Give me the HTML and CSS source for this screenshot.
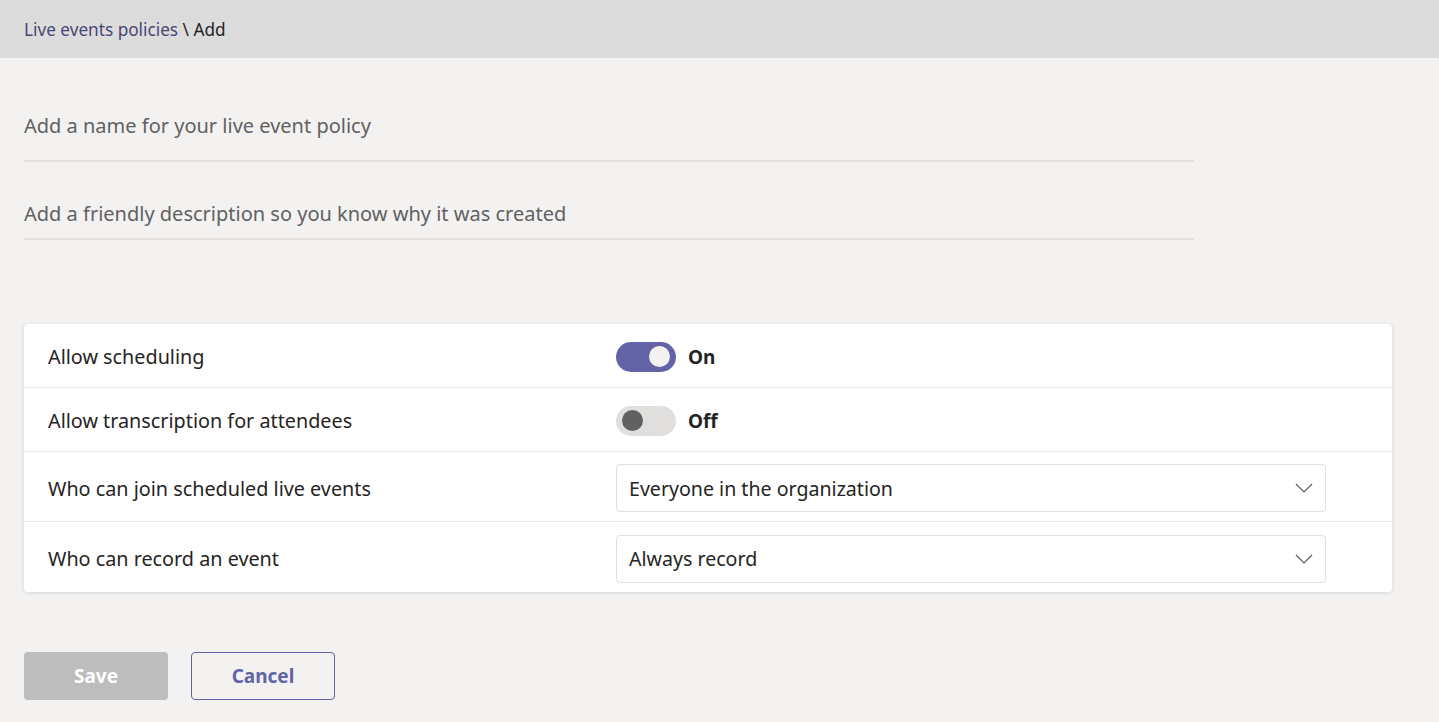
FILE: index.html
```html
<!DOCTYPE html>
<html>
<head>
<meta charset="utf-8">
<link rel="stylesheet" href="styles.css">
</head>
<body>
<header class="topbar">
  <span class="crumb-link">Live events policies</span><span class="crumb-sep"> \ Add</span>
</header>
<main class="content">
  <div class="field"><span class="placeholder">Add a name for your live event policy</span></div>
  <div class="field field-2"><span class="placeholder">Add a friendly description so you know why it was created</span></div>

  <section class="card">
    <div class="row row-toggle">
      <div class="label">Allow scheduling</div>
      <div class="control">
        <span class="toggle on"><span class="knob"></span></span>
        <span class="state">On</span>
      </div>
    </div>
    <div class="row row-toggle">
      <div class="label">Allow transcription for attendees</div>
      <div class="control">
        <span class="toggle off"><span class="knob"></span></span>
        <span class="state">Off</span>
      </div>
    </div>
    <div class="row row-select">
      <div class="label">Who can join scheduled live events</div>
      <div class="control">
        <div class="select"><span>Everyone in the organization</span>
          <svg class="chev" width="18" height="10" viewBox="0 0 18 10"><path d="M1 1 L9 9 L17 1" fill="none" stroke="#616161" stroke-width="1.2"/></svg>
        </div>
      </div>
    </div>
    <div class="row row-select last">
      <div class="label">Who can record an event</div>
      <div class="control">
        <div class="select"><span>Always record</span>
          <svg class="chev" width="18" height="10" viewBox="0 0 18 10"><path d="M1 1 L9 9 L17 1" fill="none" stroke="#616161" stroke-width="1.2"/></svg>
        </div>
      </div>
    </div>
  </section>

  <div class="actions">
    <button class="btn btn-save">Save</button>
    <button class="btn btn-cancel">Cancel</button>
  </div>
</main>
</body>
</html>
```
FILE: styles.css
```css
* { box-sizing: border-box; }
html, body { margin: 0; padding: 0; }
body {
  background: #f3f2f1;
  font-family: "Noto Sans", "Open Sans", sans-serif;
  color: #252423;
  width: 1439px;
  height: 722px;
  overflow: hidden;
}
.topbar {
  height: 58px;
  background: #dddcdc;
  padding: 0 24px;
  display: flex;
  align-items: center;
  font-size: 17.2px;
  padding-top: 1px;
}
.crumb-link { color: #464775; }
.crumb-sep { color: #252423; white-space: pre; }
.content { padding: 0 24px; }
.field {
  width: 1170px;
  height: 104px;
  border-bottom: 2px solid #e1dfdd;
  display: flex;
  align-items: flex-end;
  padding-bottom: 21px;
}
.field-2 { height: 78px; padding-bottom: 11px; }
.placeholder { font-size: 20px; color: #616161; }
.card {
  margin-top: 84px;
  width: 1368px;
  background: #fff;
  border-radius: 4px;
  box-shadow: 0 1px 4px rgba(0,0,0,0.12);
}
.row {
  display: flex;
  align-items: center;
  border-bottom: 1px solid #edebe9;
  padding-left: 24px;
}
.row.last { border-bottom: none; }
.row-toggle { height: 64px; padding-top: 2px; }
.row-select { height: 70px; padding-top: 3px; }
.label { width: 568px; font-size: 19.8px; color: #252423; }
.control { display: flex; align-items: center; }
.toggle {
  width: 60px;
  height: 30px;
  border-radius: 15px;
  display: flex;
  align-items: center;
  padding: 0 6px;
}
.toggle.on { background: #6264a7; justify-content: flex-end; }
.toggle.off { background: #e1dfdd; justify-content: flex-start; }
.knob { width: 21px; height: 21px; border-radius: 50%; }
.toggle.on .knob { background: #f3f2f1; }
.toggle.off .knob { background: #616161; }
.state { margin-left: 12px; font-size: 19px; font-weight: 700; }
.select {
  width: 710px;
  height: 48px;
  border: 1px solid #e1dfdd;
  border-radius: 4px;
  display: flex;
  align-items: center;
  justify-content: space-between;
  padding: 0 12px 0 12px;
  font-size: 19.6px;
  color: #252423;
}
.actions { margin-top: 60px; display: flex; gap: 23px; }
.btn {
  width: 144px;
  height: 48px;
  border-radius: 4px;
  font-family: "Noto Sans", "Open Sans", sans-serif;
  font-size: 19px;
  font-weight: 700;
}
.btn-save { background: #bdbdbd; color: #fff; border: none; }
.btn-cancel { background: transparent; color: #6264a7; border: 1px solid #6264a7; }
```
